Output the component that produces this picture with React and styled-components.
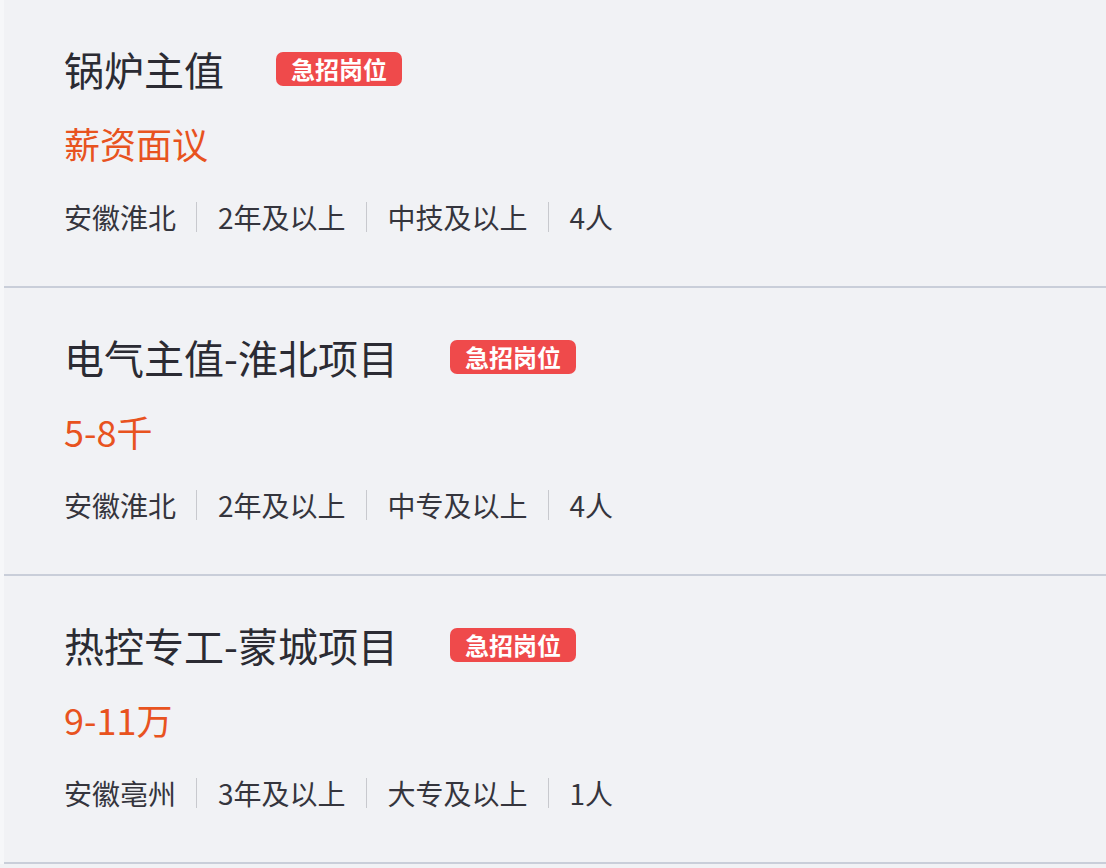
import React from "react"
import styled, { createGlobalStyle } from "styled-components"

const GlobalStyle = createGlobalStyle`
  body {
    margin: 0;
    background: #f1f2f5;
    font-family: "Noto Sans CJK SC", "Noto Sans", sans-serif;
  }
`

const StyledList = styled.div`
  width: 1106px;
  border-left: 4px solid #f6f7f9;
  box-sizing: border-box;
`

const StyledRow = styled.div`
  height: 288px;
  box-sizing: border-box;
  padding: 49px 0 0 60px;
  border-bottom: 2px solid #c9ced9;
  display: flex;
  flex-direction: column;
`

const StyledTitleRow = styled.div`
  display: flex;
  align-items: center;
  height: 40px;
  gap: 52px;
`

const StyledTitle = styled.div`
  font-size: 40px;
  line-height: 40px;
  color: #2b2b33;
`

const StyledBadge = styled.span`
  background: #ef4a4b;
  color: #fff;
  font-size: 24px;
  font-weight: 700;
  line-height: 34px;
  height: 34px;
  padding: 0 15px;
  border-radius: 7px;
`

const StyledSalary = styled.div`
  margin-top: 36px;
  font-size: 36px;
  line-height: 36px;
  color: #e8531f;
`

const StyledMeta = styled.div`
  margin-top: 41px;
  display: flex;
  align-items: center;
  height: 30px;
  font-size: 28px;
  color: #35353d;
`

const StyledMetaItem = styled.span`
  padding: 0 20px 0 21px;
  line-height: 30px;
  border-left: 1px solid #c8c9ce;

  &:first-child {
    padding-left: 0;
    border-left: none;
  }
`

const jobs = [
  {
    title: "锅炉主值",
    salary: "薪资面议",
    meta: ["安徽淮北", "2年及以上", "中技及以上", "4人"],
  },
  {
    title: "电气主值-淮北项目",
    salary: "5-8千",
    meta: ["安徽淮北", "2年及以上", "中专及以上", "4人"],
  },
  {
    title: "热控专工-蒙城项目",
    salary: "9-11万",
    meta: ["安徽亳州", "3年及以上", "大专及以上", "1人"],
  },
]

const App = () => (
  <>
    <GlobalStyle />
    <StyledList>
      {jobs.map((job) => (
        <StyledRow key={job.title}>
          <StyledTitleRow>
            <StyledTitle>{job.title}</StyledTitle>
            <StyledBadge>急招岗位</StyledBadge>
          </StyledTitleRow>
          <StyledSalary>{job.salary}</StyledSalary>
          <StyledMeta>
            {job.meta.map((m) => (
              <StyledMetaItem key={m}>{m}</StyledMetaItem>
            ))}
          </StyledMeta>
        </StyledRow>
      ))}
    </StyledList>
  </>
)

export default App
